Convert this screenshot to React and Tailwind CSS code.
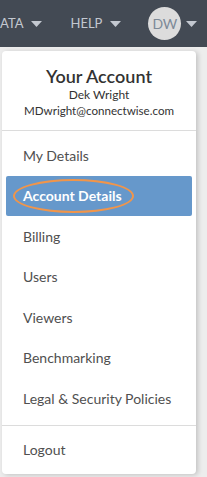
import React from 'react'

const Caret = () => (
  <svg width="11" height="6" viewBox="0 0 11 6" className="shrink-0">
    <path d="M0 0h11L5.5 6z" fill="#c3c8d0" />
  </svg>
)

const menuItems = [
  'My Details',
  'Account Details',
  'Billing',
  'Users',
  'Viewers',
  'Benchmarking',
  'Legal & Security Policies',
]

const App = () => {
  return (
    <div
      className="w-[207px] h-[477px] overflow-hidden bg-[#ededed] flex flex-col"
      style={{ fontFamily: 'Lato, "Open Sans", sans-serif' }}
    >
      {/* Top bar */}
      <div className="h-[47px] shrink-0 bg-[#434a54] flex items-center text-[13px] text-[#c3c8d0]">
        <div className="flex items-center gap-[8px]">
          <span>ATA</span>
          <Caret />
        </div>
        <div className="flex items-center gap-[8px] ml-[28px]">
          <span>HELP</span>
          <Caret />
        </div>
        <div className="flex items-center gap-[5px] ml-[27px]">
          <div className="w-[33px] h-[33px] rounded-full bg-[#dcdcdc] flex items-center justify-center text-[14px] text-[#7d8a98]">
            DW
          </div>
          <Caret />
        </div>
      </div>

      {/* Dropdown panel */}
      <div className="mt-[4px] ml-[2px] w-[194px] h-[423px] bg-white rounded-[4px] shadow-[2px_1px_5px_rgba(0,0,0,0.18)] flex flex-col">
        <div className="pt-[14px] pb-[11px] flex flex-col items-center text-[#333]">
          <div className="text-[18px] leading-[22px] font-semibold">Your Account</div>
          <div className="text-[12px] leading-[16px]">Dek Wright</div>
          <div className="text-[11.6px] leading-[16px]">MDwright@connectwise.com</div>
        </div>
        <div className="h-px bg-[#dcdcdc]" />

        <ul className="py-[4px] px-[4px]">
          {menuItems.map((label) => {
            const active = label === 'Account Details'
            return (
              <li
                key={label}
                className={`relative h-[40.5px] flex items-center pl-[17px] text-[14px] rounded-[2px] ${
                  active ? 'bg-[#6698cb] text-white font-bold' : 'text-[#505050]'
                }`}
              >
                {label}
                {active && (
                  <span className="absolute left-[7px] top-[3px] w-[121px] h-[34px] rounded-[50%] border-[2.5px] border-[#f1954a]" />
                )}
              </li>
            )
          })}
        </ul>
        <div className="h-px bg-[#dcdcdc] mt-[2px]" />
        <div className="h-[40px] flex items-center pl-[21px] text-[14px] text-[#505050] mt-[4px]">
          Logout
        </div>
      </div>
    </div>
  )
}

export default App
